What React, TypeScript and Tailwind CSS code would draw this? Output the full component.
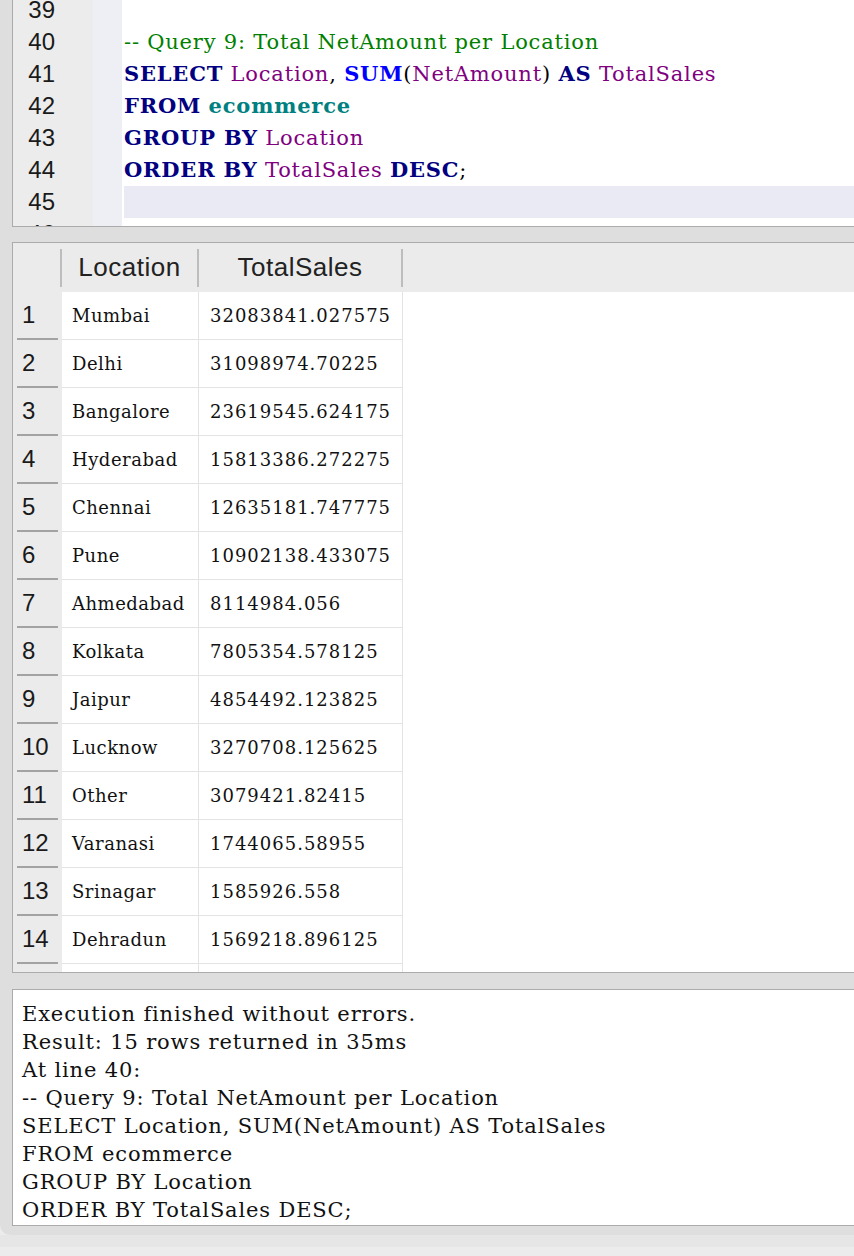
import React from 'react'

const serif = "font-['DejaVu_Serif','Liberation_Serif',serif]"
const sans = "font-['Liberation_Sans',Arial,sans-serif]"

type Tok = { t: string; c: string }

const kw = (t: string): Tok => ({ t, c: 'text-[#000080] font-bold' })
const fn = (t: string): Tok => ({ t, c: 'text-[#0000ff] font-bold' })
const id = (t: string): Tok => ({ t, c: 'text-[#800080]' })
const tb = (t: string): Tok => ({ t, c: 'text-[#008080] font-bold' })
const pl = (t: string): Tok => ({ t, c: 'text-black' })
const cm = (t: string): Tok => ({ t, c: 'text-[#008000]' })

const codeLines: { n: number; toks: Tok[] }[] = [
  { n: 39, toks: [] },
  { n: 40, toks: [cm('-- Query 9: Total NetAmount per Location')] },
  { n: 41, toks: [kw('SELECT'), pl(' '), id('Location'), pl(', '), fn('SUM'), pl('('), id('NetAmount'), pl(') '), kw('AS'), pl(' '), id('TotalSales')] },
  { n: 42, toks: [kw('FROM'), pl(' '), tb('ecommerce')] },
  { n: 43, toks: [kw('GROUP BY'), pl(' '), id('Location')] },
  { n: 44, toks: [kw('ORDER BY'), pl(' '), id('TotalSales'), pl(' '), kw('DESC'), pl(';')] },
  { n: 45, toks: [] },
  { n: 46, toks: [] },
]

const rows = [
  ['Mumbai', '32083841.027575'],
  ['Delhi', '31098974.70225'],
  ['Bangalore', '23619545.624175'],
  ['Hyderabad', '15813386.272275'],
  ['Chennai', '12635181.747775'],
  ['Pune', '10902138.433075'],
  ['Ahmedabad', '8114984.056'],
  ['Kolkata', '7805354.578125'],
  ['Jaipur', '4854492.123825'],
  ['Lucknow', '3270708.125625'],
  ['Other', '3079421.82415'],
  ['Varanasi', '1744065.58955'],
  ['Srinagar', '1585926.558'],
  ['Dehradun', '1569218.896125'],
]

const messages = [
  'Execution finished without errors.',
  'Result: 15 rows returned in 35ms',
  'At line 40:',
  '-- Query 9: Total NetAmount per Location',
  'SELECT Location, SUM(NetAmount) AS TotalSales',
  'FROM ecommerce',
  'GROUP BY Location',
  'ORDER BY TotalSales DESC;',
]

const Editor = () => (
  <div className="flex h-[227px] shrink-0 overflow-hidden border-b border-l border-[#ababab] bg-white">
    <div className="w-[80px] shrink-0 bg-[#ececec]">
      <div className="-mt-[6px]">
        {codeLines.map((l) => (
          <div key={l.n} className={`h-[32px] pr-[38px] text-right text-[24px] leading-[32px] text-[#1a1a1a] ${sans}`}>
            {l.n}
          </div>
        ))}
      </div>
    </div>
    <div className="w-[29px] shrink-0 bg-[#eeeef5]" />
    <div className="flex-1 pl-[2px]">
      <div className="-mt-[6px]">
        {codeLines.map((l) => (
          <div
            key={l.n}
            className={`h-[32px] whitespace-pre text-[21px] leading-[32px] tracking-[0.8px] ${serif} ${l.n === 45 ? 'bg-[#e9eaf3]' : ''}`}
          >
            {l.toks.map((tk, i) => (
              <span key={i} className={tk.c}>
                {tk.t}
              </span>
            ))}
          </div>
        ))}
      </div>
    </div>
  </div>
)

const ResultTable = () => (
  <div className="mt-[15px] h-[731px] shrink-0 overflow-hidden border-y border-l border-[#ababab] bg-white">
    <div className="grid h-[49px] grid-cols-[49px_137px_204px_1fr] bg-[#ebebeb]">
      <div className="flex items-center justify-end">
        <div className="h-[38px] w-[2px] bg-[#bdbdbd]" />
      </div>
      <div className="flex items-center">
        <div className={`flex-1 text-center text-[26px] tracking-[0.5px] text-[#222] ${sans}`}>Location</div>
        <div className="h-[38px] w-[2px] bg-[#bdbdbd]" />
      </div>
      <div className="flex items-center">
        <div className={`flex-1 text-center text-[26px] tracking-[0.5px] text-[#222] ${sans}`}>TotalSales</div>
        <div className="h-[38px] w-[2px] bg-[#bdbdbd]" />
      </div>
      <div />
    </div>
    {rows.map((r, i) => (
      <div key={i} className="grid h-[48px] grid-cols-[49px_137px_204px_1fr]">
        <div className="flex flex-col bg-[#ebebeb]">
          <div className={`flex flex-1 items-center pl-[9px] text-[24px] text-[#1a1a1a] ${sans}`}>{i + 1}</div>
          <div className="mx-[4px] h-[2px] bg-[#a3a3a3]" />
        </div>
        <div className={`flex items-center border-r border-b border-[#e3e3e3] pl-[10px] text-[18px] tracking-[0.5px] text-[#111] ${serif}`}>
          {r[0]}
        </div>
        <div className={`flex items-center border-r border-b border-[#e3e3e3] pl-[11px] text-[18px] tracking-[1px] text-[#111] ${serif}`}>
          {r[1]}
        </div>
        <div />
      </div>
    ))}
    {/* row 15, mostly scrolled out of view */}
    <div className="grid h-[48px] grid-cols-[49px_137px_204px_1fr]">
      <div className="bg-[#ebebeb]" />
      <div className="border-r border-[#e3e3e3]" />
      <div className="border-r border-[#e3e3e3]" />
      <div />
    </div>
  </div>
)

const Messages = () => (
  <div className={`mt-[16px] h-[237px] shrink-0 border-y border-l border-[#ababab] bg-white pt-[10px] pl-[9px] text-[21px] leading-[28px] tracking-[0.85px] text-[#111] ${serif}`}>
    {messages.map((m, i) => (
      <div key={i} className="whitespace-pre">
        {m}
      </div>
    ))}
  </div>
)

export default function App() {
  return (
    <div className="flex h-[1256px] w-[854px] flex-col overflow-hidden bg-[#ececec]">
      <div className="flex h-[1235px] shrink-0 flex-col rounded-bl-[10px] bg-[#dedede] pl-[12px]">
        <Editor />
        <ResultTable />
        <Messages />
      </div>
      <div className="h-[12px] shrink-0 bg-[#e6e6e6]" />
    </div>
  )
}
